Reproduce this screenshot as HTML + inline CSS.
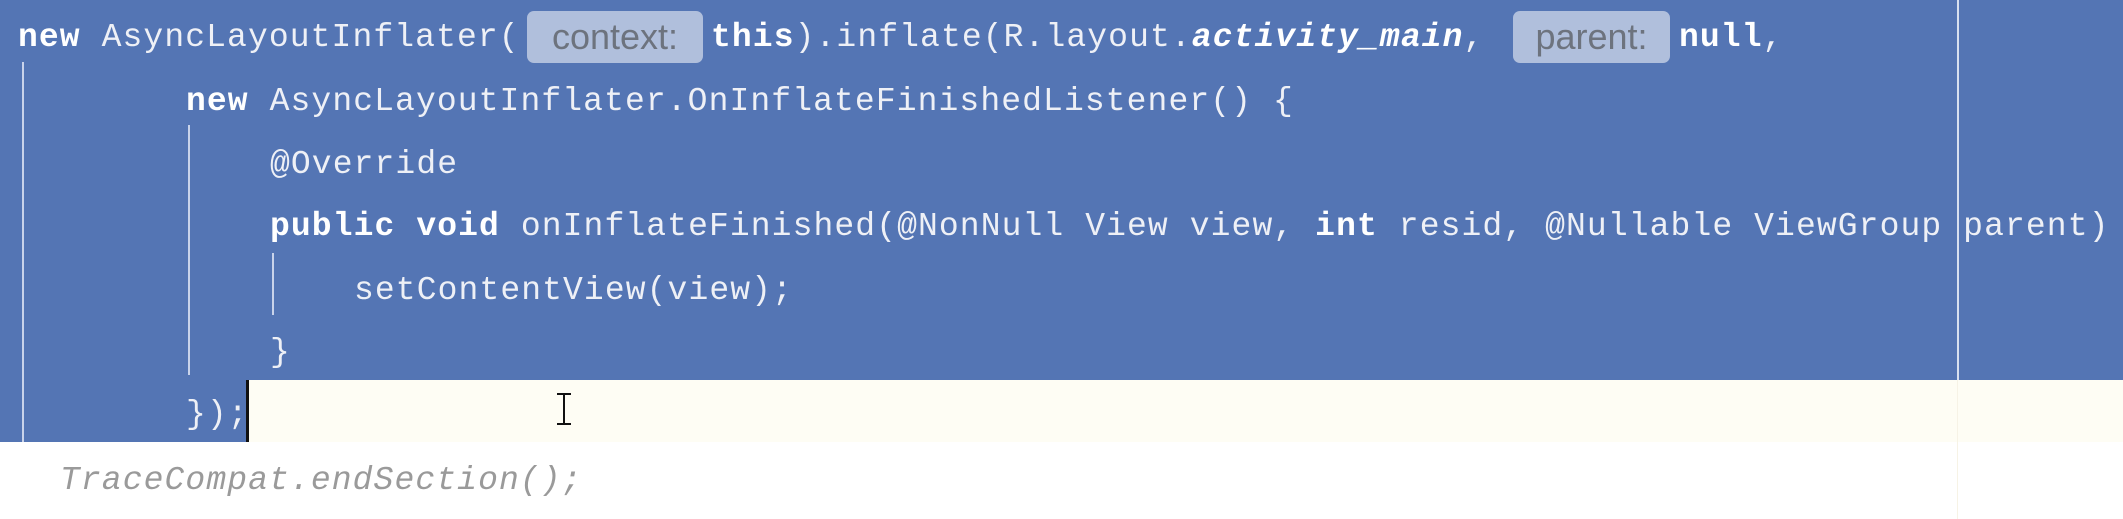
<!DOCTYPE html>
<html><head><meta charset="utf-8"><style>
html,body{margin:0;padding:0;}
body{width:2123px;height:519px;position:relative;overflow:hidden;background:#fff;font-family:"Liberation Mono",monospace;}
.sel{position:absolute;left:0;top:0;width:2123px;height:380px;background:#5475b4;}
.sel2{position:absolute;left:0;top:380px;width:248px;height:62px;background:#5475b4;}
.cream{position:absolute;left:248px;top:380px;width:1875px;height:62px;background:#fefdf4;}
.ln{position:absolute;height:63px;line-height:63px;font-size:33px;letter-spacing:1.1px;white-space:pre;color:#eef0f6;}
.ln>span.t, .ln{transform-origin:left center;}
b{font-weight:bold;color:#fff;}
.it{font-style:italic;font-weight:bold;color:#fff;}
.hint{display:inline-block;position:absolute;top:5px;height:52px;line-height:52px;background:#b0bfdc;border-radius:7px;color:#6d737e;font-family:"Liberation Sans",sans-serif;letter-spacing:0;font-size:36px;text-align:center;}
.g{position:absolute;width:2px;background:#c9d3ea;}
.cur{position:absolute;left:246px;top:380px;width:3px;height:62px;background:#111;}
.mr{position:absolute;left:1957px;top:0;width:2px;height:519px;background:#e8ecf4;}
</style></head><body>
<div class="sel"></div><div class="sel2"></div><div class="cream"></div>
<div class="mr" style="background:#d8e0ef;height:380px"></div>
<div class="mr" style="top:380px;height:139px;background:#f7f3e6;width:1px"></div>
<div class="g" style="left:22px;top:62px;height:380px"></div>
<div class="g" style="left:188px;top:125px;height:250px"></div>
<div class="g" style="left:272px;top:253px;height:62px"></div>

<div class="ln" style="left:18px;top:6px;width:2123px"><b>new</b> AsyncLayoutInflater(<span class="hint" style="left:509px;width:176px">context:</span><span style="position:absolute;left:693px"><b>this</b>).inflate(R.layout.<span class="it">activity_main</span>,</span><span class="hint" style="left:1495px;width:157px;top:5px">parent:</span><span style="position:absolute;left:1661px"><b>null</b>,</span></div>
<div class="ln" style="left:186px;top:70px"><b>new</b> AsyncLayoutInflater.OnInflateFinishedListener() {</div>
<div class="ln" style="left:270px;top:133px">@Override</div>
<div class="ln" style="left:270px;top:195px"><b>public void</b> onInflateFinished(@NonNull View view, <b>int</b> resid, @Nullable ViewGroup parent)</div>
<div class="ln" style="left:354px;top:259px">setContentView(view);</div>
<div class="ln" style="left:270px;top:321px">}</div>
<div class="ln" style="left:186px;top:383px">});</div>
<div class="cur"></div>
<div style="position:absolute;left:563px;top:394px;width:2px;height:30px;background:#111"></div>
<div style="position:absolute;left:557px;top:393px;width:14px;height:2px;background:#111"></div>
<div style="position:absolute;left:557px;top:423px;width:14px;height:2px;background:#111"></div>
<div class="ln" style="left:60px;top:449px;color:#9a9a9a;font-style:italic">TraceCompat.endSection();</div>
</body></html>
